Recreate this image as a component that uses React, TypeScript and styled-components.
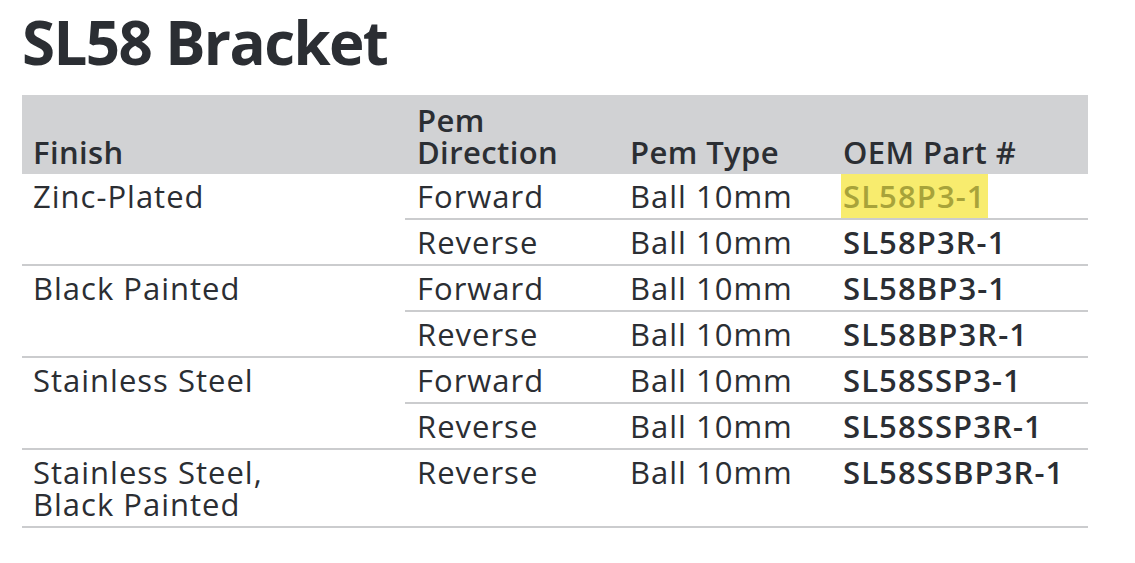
import React from "react";
import styled, { createGlobalStyle } from "styled-components";

const Global = createGlobalStyle`
  html, body { margin: 0; padding: 0; background: #ffffff; }
  body { font-family: "Open Sans", "Noto Sans", sans-serif; color: #2b2e33; }
`;

const Page = styled.div`
  padding: 6px 0 0 22px;
  width: 1066px;
`;

const Title = styled.h1`
  margin: 0 0 17px 0;
  font-size: 60px;
  line-height: 72px;
  font-weight: 700;
  color: #2b2e33;
  letter-spacing: -1.6px;
`;

const Table = styled.table`
  width: 1066px;
  border-collapse: collapse;
  table-layout: fixed;
  font-size: 31px;
  line-height: 32px;
`;

const HeadRow = styled.tr`
  background: #d1d2d4;
  height: 79px;
`;

const Th = styled.th<{ $w: number; $first?: boolean }>`
  width: ${(p) => p.$w}px;
  text-align: left;
  vertical-align: bottom;
  font-weight: 600;
  letter-spacing: 0.4px;
  padding: 0 12px 6px ${(p) => (p.$first ? 11 : 12)}px;
  color: #2b2e33;
`;

const Td = styled.td<{ $bold?: boolean; $first?: boolean }>`
  vertical-align: top;
  padding: 6px 12px 6px ${(p) => (p.$first ? 11 : 12)}px;
  font-weight: ${(p) => (p.$bold ? 600 : 400)};
  letter-spacing: ${(p) => (p.$bold ? 1.1 : 1)}px;
  border-bottom: 2px solid #cbccce;
  white-space: nowrap;
`;

const Highlight = styled.span`
  background: #f8ec6e;
  color: #a8a33a;
  padding: 1px 2px;
  margin-left: -2px;
`;

type Row = { dir: string; part: string; hl?: boolean };
type Group = { finish: string[]; rows: Row[] };

const groups: Group[] = [
  {
    finish: ["Zinc-Plated"],
    rows: [
      { dir: "Forward", part: "SL58P3-1", hl: true },
      { dir: "Reverse", part: "SL58P3R-1" },
    ],
  },
  {
    finish: ["Black Painted"],
    rows: [
      { dir: "Forward", part: "SL58BP3-1" },
      { dir: "Reverse", part: "SL58BP3R-1" },
    ],
  },
  {
    finish: ["Stainless Steel"],
    rows: [
      { dir: "Forward", part: "SL58SSP3-1" },
      { dir: "Reverse", part: "SL58SSP3R-1" },
    ],
  },
  {
    finish: ["Stainless Steel,", "Black Painted"],
    rows: [{ dir: "Reverse", part: "SL58SSBP3R-1" }],
  },
];

export default function App() {
  return (
    <>
      <Global />
      <Page>
        <Title>SL58 Bracket</Title>
        <Table>
          <thead>
            <HeadRow>
              <Th $w={360} $first>Finish</Th>
              <Th $w={189}>
                Pem
                <br />
                Direction
              </Th>
              <Th $w={189}>Pem Type</Th>
              <Th $w={233}>OEM Part #</Th>
            </HeadRow>
          </thead>
          <tbody>
            {groups.map((g) =>
              g.rows.map((r, i) => (
                <tr key={g.finish.join() + r.part}>
                  {i === 0 && (
                    <Td $first rowSpan={g.rows.length}>
                      {g.finish.map((f, k) => (
                        <React.Fragment key={f}>
                          {k > 0 && <br />}
                          {f}
                        </React.Fragment>
                      ))}
                    </Td>
                  )}
                  <Td>{r.dir}</Td>
                  <Td>Ball 10mm</Td>
                  <Td $bold>{r.hl ? <Highlight>{r.part}</Highlight> : r.part}</Td>
                </tr>
              ))
            )}
          </tbody>
        </Table>
      </Page>
    </>
  );
}
